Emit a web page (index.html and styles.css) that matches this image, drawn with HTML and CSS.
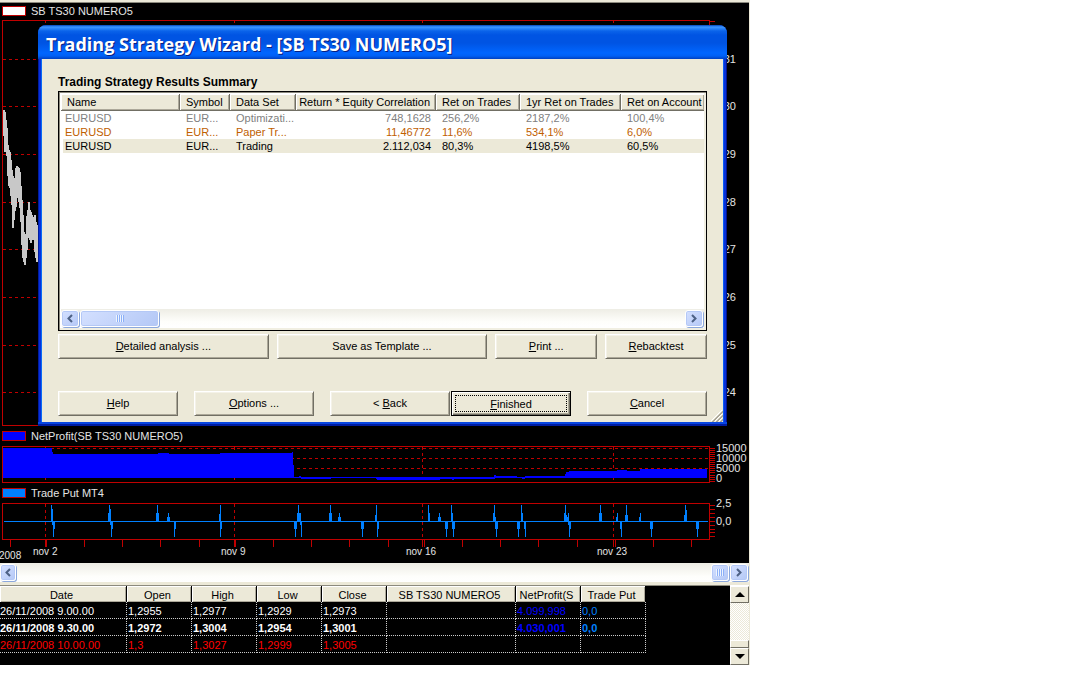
FILE: index.html
```html
<!DOCTYPE html>
<html lang="en">
<head>
<meta charset="utf-8">
<title>Trading Strategy Wizard</title>
<link rel="stylesheet" href="styles.css">
</head>
<body>
<main class="app">
  <section class="charts">
    <div class="legend legend-price"><span class="swatch swatch-white"></span>SB TS30 NUMERO5</div>
    <svg class="panel" viewBox="0 18 749 409" role="img" aria-label="Price chart">
      <g class="frame"><path d="M709.5 425.5H2.5V20.5H709.5V425.5M709.5 21.5H715M45.5 20V23M234.5 20V23M422.5 20V23M613.5 20V23"/></g>
      <g class="dash"><path d="M3 59.5H709M3 106.5H709M3 154.5H709M3 202.5H709M3 249.5H709M3 297.5H709M3 345.5H709M3 392.5H709"/></g>
      <path class="price" d="M4 110V136M5 112V152M6 120V148M7 128V156M8 145V176M9 150V186M10 152V188M11 160V196M12 170V205M13 176V228M14 185V220M15 178V211M16 168V207M17 166V198M18 167V196M19 168V202M20 172V208M21 186V222M22 200V245M23 215V258M24 232V262M25 240V265M26 234V258M27 216V250M28 210V238M29 202V228M30 210V240M31 212V243M32 215V240M33 217V240M34 218V235M35 215V252M36 222V258M37 225V262"/>
      <g class="label end">
        <text x="736" y="63">1,31</text><text x="736" y="110">1,30</text><text x="736" y="158">1,29</text><text x="736" y="206">1,28</text>
        <text x="736" y="253">1,27</text><text x="736" y="301">1,26</text><text x="736" y="349">1,25</text><text x="736" y="396">1,24</text>
      </g>
    </svg>
    <div class="legend legend-profit"><span class="swatch swatch-blue"></span>NetProfit(SB TS30 NUMERO5)</div>
    <svg class="panel" viewBox="0 444 749 42" role="img" aria-label="Net profit chart">
      <g class="dash"><path d="M3 448.5H709M3 458.5H709M3 468.5H709M45.5 447V480M234.5 447V480M422.5 447V480M613.5 447V480"/></g>
      <path class="profit" d="M3 448H52V452H53V454H158V453H169V454H220V453H292V452H293V465H294V477H299V476H301V477H494V475H496V476H517V477H522V477H525V476H565V474H566V472H569V471H617V470H627V471H640V469H707V478H525V479H522V478H495V479H454V480H452V479H440V480H377V479H376V478H331V479H301V478H3Z"/>
      <g class="frame"><path d="M2.5 446.5H709.5V482.5H2.5ZM709.5 448.5H715M709.5 450.5H715M709.5 452.5H715M709.5 454.5H715M709.5 456.5H715M709.5 458.5H715M709.5 460.5H715M709.5 462.5H715M709.5 464.5H715M709.5 466.5H715M709.5 468.5H715M709.5 470.5H715M709.5 472.5H715M709.5 475.5H715M709.5 477.5H715M709.5 479.5H715M709.5 481.5H715"/></g>
      <g class="label"><text x="716" y="452">15000</text><text x="716" y="462">10000</text><text x="716" y="472">5000</text><text x="716" y="482">0</text></g>
    </svg>
    <div class="legend legend-trade"><span class="swatch swatch-sky"></span>Trade Put MT4</div>
    <svg class="panel" viewBox="0 500 749 63" role="img" aria-label="Trade put chart">
      <g class="dash"><path d="M45.5 504V539M234.5 504V539M422.5 504V539M613.5 504V539"/></g>
      <g class="frame"><path d="M2.5 503.5H709.5V539.5H2.5ZM709.5 505.5H715M709.5 509.5H715M709.5 513.5H715M709.5 517.5H715M709.5 521.5H715M709.5 525.5H715M709.5 529.5H715M709.5 532.5H715M709.5 536.5H715M10.5 540V547M45.5 540V547M46.5 540V547M84.5 540V547M122.5 540V547M160.5 540V547M199.5 540V547M234.5 540V547M235.5 540V547M273.5 540V547M311.5 540V547M349.5 540V547M388.5 540V547M422.5 540V547M424.5 540V547M462.5 540V547M500.5 540V547M538.5 540V547M577.5 540V547M613.5 540V547M615.5 540V547M653.5 540V547M691.5 540V547"/></g>
      <g class="trade" transform="translate(.5 0)">
        <path d="M3 521.5H707"/>
        <path d="M51 505V521M109 505V521M157 505V521M220 505V521M298 505V521M330 505V521M376 505V521M428 505V521M451 505V521M494 505V521M521 505V521M565 505V521M600 505V521M626 505V521M685 505V521"/>
        <path d="M52 509V525M108 513V521M110 509V525M156 513V521M158 513V521M168 513V521M167 517V521M169 517V521M219 514V521M297 513V521M299 513V521M300 513V525M329 513V521M331 513V521M339 513V521M338 517V521M340 517V521M375 515V521M429 513V521M439 513V521M438 517V521M440 517V521M452 513V521M493 513V521M495 517V521M522 513V521M564 513V521M566 515V521M567 517V521M568 513V525M599 513V521M601 513V521M617 513V521M616 517V521M625 515V521M627 515V521M640 513V521M639 517V521M684 515V521M686 510V521"/>
        <path d="M53 522V537M111 522V537M174 522V537M220 522V537M295 522V537M301 522V537M362 522V537M377 522V537M446 522V537M453 522V537M496 522V537M518 522V537M525 522V537M569 522V537M621 522V537M651 522V537M697 522V537"/>
        <path d="M54 522V529M112 522V529M175 522V529M221 522V529M294 522V529M296 522V529M361 522V529M363 522V529M378 522V529M445 522V529M447 522V529M452 522V529M454 522V529M495 522V529M497 522V529M517 522V529M519 522V529M524 522V529M570 522V529M620 522V529M650 522V529M652 522V529M696 522V529M698 522V529"/>
      </g>
      <g class="label"><text x="716" y="507">2,5</text><text x="716" y="525">0,0</text></g>
      <g class="label small"><text x="-1" y="559">2008</text><text x="33" y="555">nov 2</text><text x="221" y="555">nov 9</text><text x="406" y="555">nov 16</text><text x="597" y="555">nov 23</text></g>
    </svg>

    <section class="dialog" role="dialog" aria-labelledby="dialog-title">
      <h1 class="titlebar" id="dialog-title">Trading Strategy Wizard - [SB TS30 NUMERO5]</h1>
      <div class="dialog-body">
        <h2 class="summary-title">Trading Strategy Results Summary</h2>
        <div class="list">
          <div class="list-view">
            <table class="results">
              <colgroup><col class="c-name"><col class="c-symbol"><col class="c-set"><col class="c-corr"><col class="c-ret"><col class="c-year"><col></colgroup>
              <thead><tr><th>Name</th><th>Symbol</th><th>Data Set</th><th class="num">Return * Equity Correlation</th><th>Ret on Trades</th><th>1yr Ret on Trades</th><th>Ret on Account</th></tr></thead>
              <tbody>
                <tr class="optimization"><td>EURUSD</td><td>EUR...</td><td>Optimizati...</td><td class="num">748,1628</td><td>256,2%</td><td>2187,2%</td><td>100,4%</td></tr>
                <tr class="paper"><td>EURUSD</td><td>EUR...</td><td>Paper Tr...</td><td class="num">11,46772</td><td>11,6%</td><td>534,1%</td><td>6,0%</td></tr>
                <tr class="selected"><td>EURUSD</td><td>EUR...</td><td>Trading</td><td class="num">2.112,034</td><td>80,3%</td><td>4198,5%</td><td>60,5%</td></tr>
              </tbody>
            </table>
          </div>
          <div class="hscroll">
            <button class="xp-btn" type="button" aria-label="Scroll left"><svg class="chevron" viewBox="0 0 8 9"><path d="M6 1L2.500 4.500L6 8"/></svg></button>
            <div class="thumb thumb-list"><span class="grip"></span></div>
            <button class="xp-btn push" type="button" aria-label="Scroll right"><svg class="chevron" viewBox="0 0 8 9"><path d="M2 1L5.500 4.500L2 8"/></svg></button>
          </div>
        </div>
        <div class="actions">
          <button class="btn wide" type="button"><span><u>D</u>etailed analysis ...</span></button>
          <button class="btn wide" type="button">Save as Template ...</button>
          <button class="btn narrow" type="button"><span><u>P</u>rint ...</span></button>
          <button class="btn narrow" type="button"><span><u>R</u>ebacktest</span></button>
        </div>
        <div class="nav">
          <button class="btn" type="button"><span><u>H</u>elp</span></button>
          <button class="btn" type="button"><span><u>O</u>ptions ...</span></button>
          <div class="pair">
            <button class="btn" type="button"><span>&lt; <u>B</u>ack</span></button>
            <button class="btn default" type="button"><span class="focus"><span><u>F</u>inished</span></span></button>
          </div>
          <button class="btn" type="button"><span><u>C</u>ancel</span></button>
        </div>
        <svg class="resize" viewBox="0 0 12 12"><path class="light" d="M0 11L11 0M4 11L11 4M8 11L11 8"/><path d="M1 12L12 1M2 12L12 2M5 12L12 5M6 12L12 6M9 12L12 9M10 12L12 10"/></svg>
      </div>
    </section>
  </section>

  <div class="hscroll hscroll-main">
    <button class="xp-btn" type="button" aria-label="Scroll left"><svg class="chevron" viewBox="0 0 8 9"><path d="M6 1L2.500 4.500L6 8"/></svg></button>
    <div class="thumb thumb-main push"><span class="grip"></span></div>
    <button class="xp-btn" type="button" aria-label="Scroll right"><svg class="chevron" viewBox="0 0 8 9"><path d="M2 1L5.500 4.500L2 8"/></svg></button>
  </div>

  <section class="data">
    <div class="data-view">
      <table class="quotes">
        <colgroup><col class="q-date"><col class="q-val"><col class="q-val"><col class="q-val"><col class="q-val"><col class="q-sys"><col class="q-val"><col class="q-val"></colgroup>
        <thead><tr><th>Date</th><th>Open</th><th>High</th><th>Low</th><th>Close</th><th>SB TS30 NUMERO5</th><th>NetProfit(S</th><th>Trade Put</th></tr></thead>
        <tbody>
          <tr><td>26/11/2008 9.00.00</td><td>1,2955</td><td>1,2977</td><td>1,2929</td><td>1,2973</td><td></td><td class="profit-val">4.099,998</td><td class="trade-val">0,0</td></tr>
          <tr class="current"><td>26/11/2008 9.30.00</td><td>1,2972</td><td>1,3004</td><td>1,2954</td><td>1,3001</td><td></td><td class="profit-val">4.030,001</td><td class="trade-val">0,0</td></tr>
          <tr class="next"><td>26/11/2008 10.00.00</td><td>1,3</td><td>1,3027</td><td>1,2999</td><td>1,3005</td><td></td><td></td><td></td></tr>
        </tbody>
      </table>
    </div>
    <div class="vscroll">
      <button class="classic" type="button" aria-label="Scroll up"><span class="arrow up"></span></button>
      <div class="vtrack"></div>
      <div class="vthumb"></div>
      <button class="classic" type="button" aria-label="Scroll down"><span class="arrow down"></span></button>
    </div>
  </section>
</main>
</body>
</html>
```

FILE: styles.css
```css
* { box-sizing: border-box; }

body {
  margin: 0;
  background: #fff;
  color: #000;
  font: 11px/14px "Liberation Sans", Arial, sans-serif;
}

button { font: inherit; color: inherit; margin: 0; padding: 0; }

.app {
  max-width: 750px;
  border-top: 2px solid #ece9d8;
  border-right: 1px solid #ece9d8;
}

/* Charts */
.charts {
  position: relative;
  overflow: hidden;
  background: #000;
  border-top: 1px solid #8c8a7e;
}

.legend {
  display: flex;
  align-items: center;
  gap: 5px;
  padding-left: 2px;
  color: #e4e4e4;
}
.legend-price { height: 15px; }
.legend-profit { height: 17px; }
.legend-trade { height: 14px; }

.swatch { width: 24px; height: 10px; border: 1px solid #c00000; }
.swatch-white { background: #fff; }
.swatch-blue { background: #00f; }
.swatch-sky { background: #0080ff; }

.panel { display: block; width: 100%; height: auto; overflow: visible; }
.frame path { fill: none; stroke: #c00000; shape-rendering: crispEdges; }
.dash path { fill: none; stroke: #c00000; stroke-dasharray: 3 3; shape-rendering: crispEdges; }
.price { stroke: #c8c8c8; stroke-width: 2; shape-rendering: crispEdges; }
.profit { fill: #00f; shape-rendering: crispEdges; }
.trade path { fill: none; stroke: #0080ff; shape-rendering: crispEdges; }
.label { fill: #e4e4e4; font-size: 11px; }
.end { text-anchor: end; }
.small { font-size: 10px; }

/* Wizard window */
.dialog {
  position: absolute;
  left: 38px;
  top: 22px;
  width: calc(100% - 60px);
  border-radius: 8px 8px 0 0;
  background: #0846e0;
  overflow: hidden;
}

.titlebar {
  margin: 0;
  height: 34px;
  padding: 4px 8px 0;
  background: linear-gradient(#0042b8 0, #3d95ff 2px, #0a63ea 6px, #0054e3 10px, #0054e3 18px, #0066ff 28px, #0060f4 31px, #0040c0 34px);
  color: #fff;
  font: bold 18px/30px "Open Sans", "Noto Sans", sans-serif;
  text-shadow: 1px 1px #0a1f80;
  white-space: nowrap;
}

.dialog-body {
  position: relative;
  margin: 0 4px 4px;
  padding: 16px 16px 5px;
  background: #ece9d8;
  box-shadow: -1px 0 #0a6cf5, -3px 0 #0831d9, -4px 0 #001ca0, 1px 0 #0a5cf5, 3px 0 #0831d9, 4px 0 #001590;
}
.dialog::after {
  content: "";
  position: absolute;
  inset: auto 0 0;
  height: 2px;
  background: #001ca0;
}

.summary-title { margin: 0; font-size: 12px; line-height: 14px; height: 16px; }

.list {
  border: 1px solid #000;
  padding: 2px;
  background: #fff;
  box-shadow: inset 1px 1px #8c8a7e, inset -2px -2px #f1efe2;
}
.list-view { height: 215px; overflow: hidden; }

.results { width: 100%; table-layout: fixed; border-collapse: separate; border-spacing: 0; }
.c-name { width: 119px; }
.c-symbol { width: 50px; }
.c-set { width: 66px; }
.c-corr { width: 140px; }
.c-ret { width: 84px; }
.c-year { width: 101px; }
.results th, .results td { white-space: nowrap; overflow: hidden; text-align: left; font-weight: normal; padding: 0 0 0 6px; }
.results th {
  height: 17px;
  background: #ece9d8;
  border-right: 1px solid #716f64;
  border-bottom: 1px solid #716f64;
  box-shadow: inset 1px 1px #fff, inset -1px -1px #aca899;
}
.results th:last-child { border-right: 0; }
.results td { height: 14px; line-height: 13px; padding-top: 1px; }
.results td:first-child { border-left: 2px solid #fff; padding-left: 2px; }
.results .num { text-align: right; padding-left: 0; padding-right: 5px; }
.optimization { color: #808080; }
.paper { color: #c06000; }
.selected { background: #ece9d8; }

/* Horizontal scroll bars */
.hscroll {
  display: flex;
  align-items: center;
  gap: 1px;
  height: 18px;
  background: linear-gradient(#eeede5, #fefefb 70%, #fff);
}
.push { margin-left: auto; }
.xp-btn, .thumb {
  display: flex;
  align-items: center;
  justify-content: center;
  height: 17px;
  border: 1px solid #fff;
  border-radius: 3px;
  background: linear-gradient(135deg, #d4e0ff, #b4c8f6);
  box-shadow: inset 0 0 0 1px #b4c8f6, 1px 1px #8ca8dc;
}
.xp-btn { width: 18px; }
.thumb-list { width: 79px; }
.thumb-main { width: 18px; }
.chevron { width: 8px; height: 9px; fill: none; stroke: #4d6185; stroke-width: 2; }
.grip {
  width: 8px;
  height: 7px;
  background: repeating-linear-gradient(90deg, #eef4fe 0 1px, #8cb0f8 1px 2px);
}
.list .hscroll { margin-bottom: 1px; padding-right: 1px; }
.hscroll-main { height: 19px; padding-right: 1px; }
.hscroll-main .xp-btn:first-child { width: 16px; }

/* Push buttons */
.btn {
  flex: 1 1 0;
  height: 25px;
  padding-bottom: 1px;
  border: 1px solid;
  border-color: #fff #716f64 #716f64 #fff;
  background: #ece9d8;
  box-shadow: inset 1px 1px #f4f2e8, inset -1px -1px #aca899;
  white-space: nowrap;
}
.actions { display: flex; gap: 8px; margin-top: 3px; }
.actions .wide { flex-grow: 211; }
.actions .narrow { flex-grow: 101; }
.nav { display: grid; grid-template-columns: 120fr 120fr 241fr 120fr; gap: 16px; margin-top: 32px; padding-bottom: 1px; }
.pair { display: flex; gap: 1px; }
.default { padding-bottom: 0; border-color: #000; box-shadow: inset 1px 1px #fff, inset -1px -1px #716f64, inset -2px -2px #aca899; }
.focus { display: flex; align-items: center; justify-content: center; height: 17px; margin: 0 3px; border: 1px dotted #000; }

.resize { position: absolute; right: 0; bottom: 0; width: 12px; height: 12px; stroke: #aca899; }
.resize .light { stroke: #fff; }

/* Quote grid */
.data {
  display: flex;
  background: #000;
  border-top: 3px solid #ece9d8;
  box-shadow: inset 0 1px #8c8a7e;
}
.data-view { flex: 1; min-width: 0; overflow: hidden; padding: 1px 0 12px; }
.quotes { width: 646px; table-layout: fixed; border-collapse: separate; border-spacing: 0; color: #fff; }
.q-date { width: 127px; }
.q-val { width: 65px; }
.q-sys { width: 129px; }
.quotes th {
  height: 16px;
  padding: 1px 3px 0 0;
  background: #ece9d8;
  color: #000;
  font-weight: normal;
  border-right: 1px solid #000;
  box-shadow: inset 1px 1px #fff, inset -1px -1px #aca899;
  white-space: nowrap;
  overflow: hidden;
}
.quotes td {
  height: 17px;
  padding: 2px 0 0 1px;
  border-right: 1px dotted #ccc;
  border-bottom: 1px dotted #ccc;
  white-space: nowrap;
}
.quotes td:first-child { padding-left: 0; }
.current { font-weight: bold; }
.next { color: #f00; }
.profit-val { color: #00f; }
.trade-val { color: #0080ff; }

.vscroll { display: flex; flex-direction: column; width: 19px; padding-top: 1px; background: #fff; }
.classic {
  display: flex;
  align-items: center;
  justify-content: center;
  height: 17px;
  border: 1px solid;
  border-color: #fff #716f64 #716f64 #fff;
  background: #ece9d8;
}
.vtrack { flex: 1; background: repeating-conic-gradient(#ece9d8 0 25%, #fff 0 50%) 0 0 / 2px 2px; }
.vthumb { height: 8px; background: #ece9d8; border: 1px solid; border-color: #fff #716f64 #716f64 #fff; }
.arrow { border: 5px solid transparent; }
.up { border-top: 0; border-bottom-color: #000; }
.down { border-bottom: 0; border-top-color: #000; }
```
